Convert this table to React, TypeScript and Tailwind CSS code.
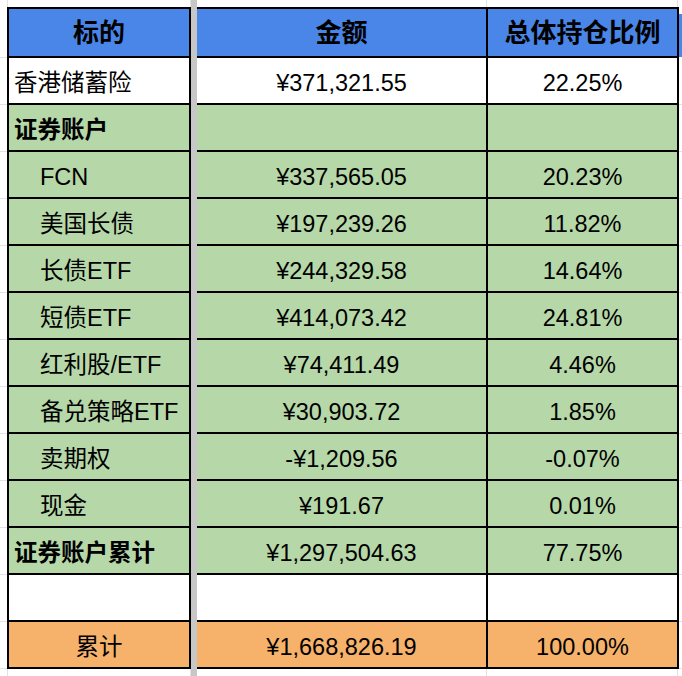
import React from "react";

type Tone = "white" | "green" | "orange";

type Row = {
  label: string;
  amount: string;
  pct: string;
  tone: Tone;
  bold?: boolean;
  indent?: boolean;
  center?: boolean;
};

const rows: Row[] = [
  { label: "香港储蓄险", amount: "¥371,321.55", pct: "22.25%", tone: "white" },
  { label: "证券账户", amount: "", pct: "", tone: "green", bold: true },
  { label: "FCN", amount: "¥337,565.05", pct: "20.23%", tone: "green", indent: true },
  { label: "美国长债", amount: "¥197,239.26", pct: "11.82%", tone: "green", indent: true },
  { label: "长债ETF", amount: "¥244,329.58", pct: "14.64%", tone: "green", indent: true },
  { label: "短债ETF", amount: "¥414,073.42", pct: "24.81%", tone: "green", indent: true },
  { label: "红利股/ETF", amount: "¥74,411.49", pct: "4.46%", tone: "green", indent: true },
  { label: "备兑策略ETF", amount: "¥30,903.72", pct: "1.85%", tone: "green", indent: true },
  { label: "卖期权", amount: "-¥1,209.56", pct: "-0.07%", tone: "green", indent: true },
  { label: "现金", amount: "¥191.67", pct: "0.01%", tone: "green", indent: true },
  { label: "证券账户累计", amount: "¥1,297,504.63", pct: "77.75%", tone: "green", bold: true },
  { label: "", amount: "", pct: "", tone: "white" },
  { label: "累计", amount: "¥1,668,826.19", pct: "100.00%", tone: "orange", center: true },
];

const toneClass: Record<Tone, string> = {
  white: "bg-white",
  green: "bg-[#b6d7a8]",
  orange: "bg-[#f6b26b]",
};

function DataRow({ r }: { r: Row }) {
  const bg = toneClass[r.tone];
  const labelAlign = r.center
    ? "justify-center"
    : r.indent
    ? "pl-[31px]"
    : "pl-[5px]";
  return (
    <div className="flex h-[47px]">
      <div className="w-[7px] shrink-0 border-b border-[#e2e2e2]" />
      <div
        className={`w-[184px] shrink-0 border-x-2 border-b-2 border-black flex items-end pb-[6px] leading-[27px] whitespace-nowrap ${bg} ${labelAlign} ${
          r.bold ? "font-bold" : ""
        }`}
      >
        {r.label}
      </div>
      <div className="w-[6px] shrink-0 bg-[#c7c7c7]" />
      <div
        className={`w-[291px] shrink-0 border-r-2 border-b-2 border-black flex items-end justify-center pb-[6px] leading-[27px] ${bg}`}
      >
        {r.amount}
      </div>
      <div
        className={`w-[191px] shrink-0 border-r-2 border-b-2 border-black flex items-end justify-center pb-[6px] leading-[27px] ${bg}`}
      >
        {r.pct}
      </div>
      <div className="flex-1 border-b border-[#e2e2e2]" />
    </div>
  );
}

export default function App() {
  return (
    <div className="w-[682px] h-[676px] overflow-hidden bg-white text-black text-[23.5px] font-['Liberation_Sans','Noto_Sans_CJK_SC',sans-serif]">
      {/* top margin row */}
      <div className="flex h-[7px]">
        <div className="w-[8px] shrink-0 border-r border-[#e2e2e2]" />
        <div className="w-[183px] shrink-0 border-r border-[#e2e2e2]" />
        <div className="w-[6px] shrink-0 bg-[#c7c7c7]" />
        <div className="w-[290px] shrink-0 border-r border-[#e2e2e2]" />
        <div className="w-[191px] shrink-0 border-r border-[#e2e2e2]" />
        <div className="flex-1" />
      </div>

      {/* header */}
      <div className="flex h-[51px] font-bold text-[26px]">
        <div className="w-[7px] shrink-0 border-b border-[#e2e2e2]" />
        <div className="w-[184px] shrink-0 border-2 border-black bg-[#4a86e8] flex items-center justify-center leading-[30px]">
          标的
        </div>
        <div className="w-[6px] shrink-0 bg-[#c7c7c7]" />
        <div className="w-[291px] shrink-0 border-y-2 border-r-2 border-black bg-[#4a86e8] flex items-center justify-center leading-[30px]">
          金额
        </div>
        <div className="w-[191px] shrink-0 border-y-2 border-r-2 border-black bg-[#4a86e8] flex items-center justify-center leading-[30px]">
          总体持仓比例
        </div>
        <div className="flex-1 bg-[#4a86e8] mt-[7px] mb-[1px]" />
      </div>

      {rows.map((r, i) => (
        <DataRow key={i} r={r} />
      ))}

      {/* bottom margin row */}
      <div className="flex h-[8px]">
        <div className="w-[8px] shrink-0 border-r border-[#e2e2e2]" />
        <div className="w-[183px] shrink-0 border-r border-[#e2e2e2]" />
        <div className="w-[6px] shrink-0 bg-[#c7c7c7]" />
        <div className="w-[290px] shrink-0 border-r border-[#e2e2e2]" />
        <div className="w-[191px] shrink-0 border-r border-[#e2e2e2]" />
        <div className="flex-1" />
      </div>
    </div>
  );
}
